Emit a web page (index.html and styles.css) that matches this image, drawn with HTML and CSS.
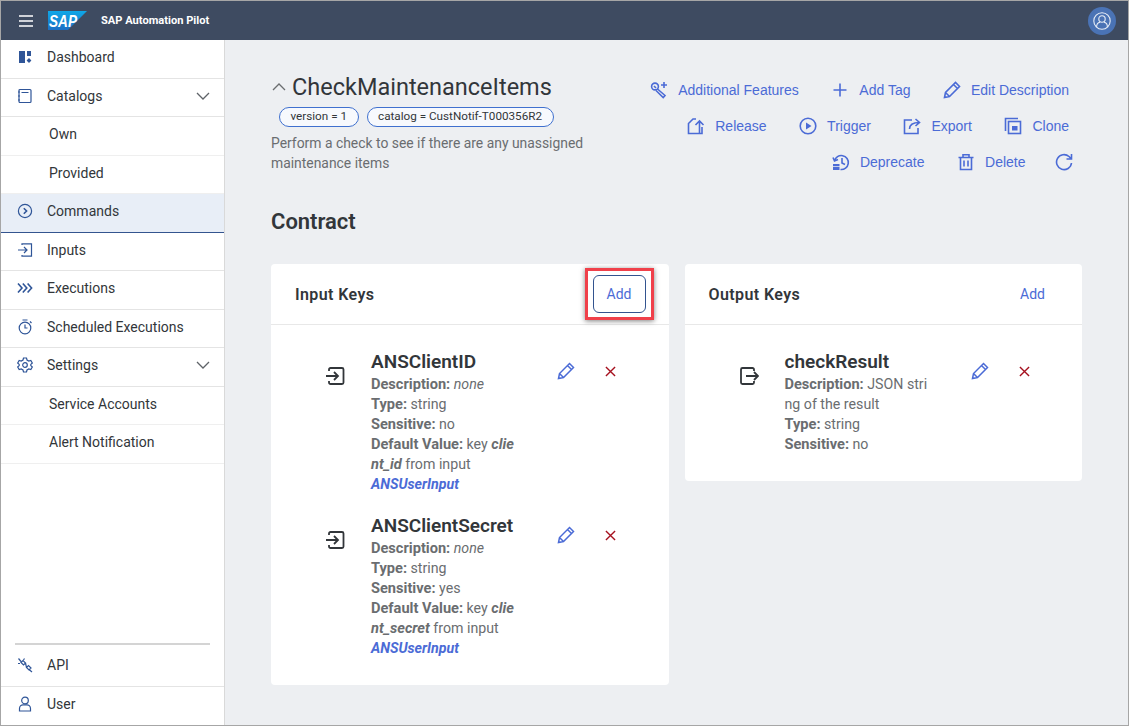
FILE: index.html
```html
<!doctype html>
<html lang="en">
<head>
	<meta charset="utf-8">
	<title>SAP Automation Pilot</title>
	<link rel="stylesheet" href="styles.css">
</head>
<body>
	<div class="frame">
		<div class="topbar">
			<svg class="burger" viewBox="0 0 14 12"><path d="M0 1h14M0 6h14M0 11h14"/></svg>
			<svg class="logo" viewBox="0 0 39 19">
				<defs><linearGradient id="sapblue" x1="0" y1="0" x2="0" y2="1"><stop offset="0" stop-color="#0fa8e8"/><stop offset="1" stop-color="#1c6fc4"/></linearGradient></defs>
				<path d="M0 0h39L20 19H0z" fill="url(#sapblue)"/>
				<text x="1" y="15.500" textLength="28" lengthAdjust="spacingAndGlyphs" class="logo-text">SAP</text>
			</svg>
			<div class="product">SAP Automation Pilot</div>
			<div class="avatar">
				<svg viewBox="0 0 18 18"><circle cx="9" cy="9" r="8.200"/><circle cx="9" cy="7" r="3.200"/><path d="M3.600 15c0-3 2-4.600 3.400-4.800M14.400 15c0-3-2-4.600-3.400-4.800"/></svg>
			</div>
		</div>
		<div class="main">
			<div class="sidebar">
				<div class="nav">
					<div class="nav-item">
						<svg class="nav-icon" viewBox="0 0 16 16"><path class="solid" d="M2 2h6v12H2zM10 2h4v5h-4z"/><path class="solid" d="M12 9l2.400 2.400L12 14l-2.400-2.600z"/></svg>
						Dashboard
					</div>
					<div class="nav-item">
						<svg class="nav-icon" viewBox="0 0 16 16"><rect x="2" y="1.500" width="12" height="13" rx="1"/><path d="M4.500 4.500h7M1 4h2M1 8h2M1 12h2"/></svg>
						Catalogs
						<svg class="caret" viewBox="0 0 14 8"><path d="M1 1l6 6 6-6"/></svg>
					</div>
					<div class="nav-item sub">Own</div>
					<div class="nav-item sub">Provided</div>
					<div class="nav-item active">
						<svg class="nav-icon" viewBox="0 0 16 16"><circle cx="8" cy="8" r="6.600"/><path class="thick" d="M6.800 5.200L9.600 8l-2.800 2.800"/></svg>
						Commands
					</div>
					<div class="nav-item">
						<svg class="nav-icon" viewBox="0 0 16 16"><path d="M5 3V1.800h9.500v12.400H5V13M1 8h8.500M7 5l3 3-3 3"/></svg>
						Inputs
					</div>
					<div class="nav-item">
						<svg class="nav-icon" viewBox="0 0 16 16"><path class="thick" d="M1 3.500L5 8l-4 4.500M5.800 3.500L9.800 8l-4 4.500M10.600 3.500L14.600 8l-4 4.500"/></svg>
						Executions
					</div>
					<div class="nav-item">
						<svg class="nav-icon" viewBox="0 0 16 16"><circle cx="8" cy="9" r="5.800"/><path d="M8 5.500V9h2.500M5.500 1h5M13 2.500l1.500 1.500"/></svg>
						Scheduled Executions
					</div>
					<div class="nav-item">
						<svg class="nav-icon" viewBox="0 0 16 16"><path d="M6.500 1h3l.5 2 1.800 1 2-.6 1.500 2.600-1.500 1.400v1.200l1.500 1.400-1.500 2.600-2-.6-1.800 1-.5 2h-3l-.5-2-1.800-1-2 .6L.7 10l1.500-1.400V7.400L.7 6l1.500-2.600 2 .6L6 3z"/><circle cx="8" cy="8" r="2.300"/></svg>
						Settings
						<svg class="caret" viewBox="0 0 14 8"><path d="M1 1l6 6 6-6"/></svg>
					</div>
					<div class="nav-item sub">Service Accounts</div>
					<div class="nav-item sub">Alert Notification</div>
				</div>
				<div class="nav-bottom">
					<div class="nav-item">
						<svg class="nav-icon" viewBox="0 0 16 16"><path d="M4 5.500L6 3.500l2.500 2.500-2 2zM9.500 10.500l2-2 2.500 2.500-2 2zM1.500 1.500L4 4.500M12 12.500L15 15M8.500 6l1 4.500M1 6.500h2M7.500 1.500L6.500 3"/></svg>
						API
					</div>
					<div class="nav-item">
						<svg class="nav-icon" viewBox="0 0 16 16"><circle cx="8" cy="4.500" r="3.300"/><path d="M2.500 15v-2.500C2.500 10 4.500 8.800 6 8.800h4c1.500 0 3.500 1.200 3.500 3.700V15z"/></svg>
						User
					</div>
				</div>
			</div>
			<div class="content">
				<div class="head">
					<div class="head-left">
						<div class="title-row">
							<svg class="title-caret" viewBox="0 0 14 8"><path d="M1 7l6-6 6 6"/></svg>
							<h1>CheckMaintenanceItems</h1>
						</div>
						<div class="chips">
							<span class="chip">version = 1</span>
							<span class="chip">catalog = CustNotif-T000356R2</span>
						</div>
						<p class="desc">Perform a check to see if there are any unassigned maintenance items</p>
					</div>
					<div class="actions">
						<div class="action-row">
							<a class="action">
								<svg viewBox="0 0 18 18"><circle cx="5" cy="5.500" r="3.400"/><path d="M7.500 8l7.500 6.500-1.800 2-7.200-7M4 5l2 2M14 1v6M11 4h6"/></svg>
								Additional Features
							</a>
							<a class="action">
								<svg viewBox="0 0 18 18"><path d="M9 2.500v13M2.500 9h13"/></svg>
								Add Tag
							</a>
							<a class="action">
								<svg viewBox="0 0 18 18"><path d="M1.500 16.500l1-5L12.500 1.500l4 4-10 10zM2.500 11.500l4 4M10.500 3.500l4 4"/></svg>
								Edit Description
							</a>
						</div>
						<div class="action-row">
							<a class="action">
								<svg viewBox="0 0 18 18"><path d="M9 2H6L1.500 6.500V16.500H15V10M12.500 16.500V4M8.500 8l4-4 4 4"/></svg>
								Release
							</a>
							<a class="action">
								<svg viewBox="0 0 18 18"><circle cx="9" cy="9" r="7.800"/><path class="solid" d="M7 5.500L12.500 9 7 12.500z"/></svg>
								Trigger
							</a>
							<a class="action">
								<svg viewBox="0 0 18 18"><path d="M9 3H1.500v13.500H15V11M6.500 12c0-4 3-6.500 10-6.500M12.500 2L16.500 5.500 12.500 9"/></svg>
								Export
							</a>
							<a class="action">
								<svg viewBox="0 0 18 18"><path d="M1.500 14V1.500H14"/><rect x="4.500" y="4.500" width="12" height="12"/><path class="solid" d="M8 9h5.500v4.500H8z"/></svg>
								Clone
							</a>
						</div>
						<div class="action-row">
							<a class="action">
								<svg viewBox="0 0 18 18"><path d="M2.500 8a7 7 0 1 1 6 8.500M1 4.500l1.500 3.500 3.500-1.500M10 5v5l3 1.500"/><path class="solid" d="M1 11h6.500v2.200H1zM1 14h6.500v3H1z"/></svg>
								Deprecate
							</a>
							<a class="action">
								<svg viewBox="0 0 18 18"><path d="M1.500 4.500h15M6 4.500V1.800h6v2.700M3.500 4.500V16.500h11v-12M7 7.500v6M11 7.500v6"/></svg>
								Delete
							</a>
							<a class="action refresh">
								<svg viewBox="0 0 18 18"><path d="M16.500 10a7.500 7.500 0 1 1-2.500-6.500L16.500 6M16.500 1v5h-5"/></svg>
							</a>
						</div>
					</div>
				</div>
				<h2>Contract</h2>
				<div class="cards">
					<div class="card">
						<div class="card-head">
							<span class="card-title">Input Keys</span>
							<span class="highlight"><button class="add outlined">Add</button></span>
						</div>
						<div class="card-body">
							<div class="key">
								<svg class="key-icon" viewBox="0 0 20 20"><path d="M4 5V3.500A1.500 1.500 0 0 1 5.500 2H17a1.500 1.500 0 0 1 1.500 1.500v13A1.500 1.500 0 0 1 17 18H5.500A1.500 1.500 0 0 1 4 16.500V15M1 10h12M9 6l4 4-4 4"/></svg>
								<div class="key-text">
									<div class="key-name">ANSClientID</div>
									<div><b>Description:</b> <i>none</i></div>
									<div><b>Type:</b> string</div>
									<div><b>Sensitive:</b> no</div>
									<div><b>Default Value:</b> key <b><i>client_id</i></b> from input <a class="link">ANSUserInput</a></div>
								</div>
								<div class="key-actions">
									<svg class="edit" viewBox="0 0 18 18"><path d="M1.500 16.500l1-5L12.500 1.500l4 4-10 10zM2.500 11.500l4 4M10.500 3.500l4 4"/></svg>
									<svg class="remove" viewBox="0 0 12 12"><path d="M1 1l10 10M11 1L1 11"/></svg>
								</div>
							</div>
							<div class="key">
								<svg class="key-icon" viewBox="0 0 20 20"><path d="M4 5V3.500A1.500 1.500 0 0 1 5.500 2H17a1.500 1.500 0 0 1 1.500 1.500v13A1.500 1.500 0 0 1 17 18H5.500A1.500 1.500 0 0 1 4 16.500V15M1 10h12M9 6l4 4-4 4"/></svg>
								<div class="key-text">
									<div class="key-name">ANSClientSecret</div>
									<div><b>Description:</b> <i>none</i></div>
									<div><b>Type:</b> string</div>
									<div><b>Sensitive:</b> yes</div>
									<div><b>Default Value:</b> key <b><i>client_secret</i></b> from input <a class="link">ANSUserInput</a></div>
								</div>
								<div class="key-actions">
									<svg class="edit" viewBox="0 0 18 18"><path d="M1.500 16.500l1-5L12.500 1.500l4 4-10 10zM2.500 11.500l4 4M10.500 3.500l4 4"/></svg>
									<svg class="remove" viewBox="0 0 12 12"><path d="M1 1l10 10M11 1L1 11"/></svg>
								</div>
							</div>
						</div>
					</div>
					<div class="card">
						<div class="card-head">
							<span class="card-title">Output Keys</span>
							<button class="add">Add</button>
						</div>
						<div class="card-body">
							<div class="key">
								<svg class="key-icon" viewBox="0 0 20 20"><path d="M15 5V3.500A1.500 1.500 0 0 0 13.500 2H3.500A1.500 1.500 0 0 0 2 3.500v13A1.500 1.500 0 0 0 3.500 18h10a1.500 1.500 0 0 0 1.500-1.500V15M7 10h12M15 6l4 4-4 4"/></svg>
								<div class="key-text">
									<div class="key-name">checkResult</div>
									<div><b>Description:</b> JSON string of the result</div>
									<div><b>Type:</b> string</div>
									<div><b>Sensitive:</b> no</div>
								</div>
								<div class="key-actions">
									<svg class="edit" viewBox="0 0 18 18"><path d="M1.500 16.500l1-5L12.500 1.500l4 4-10 10zM2.500 11.500l4 4M10.500 3.500l4 4"/></svg>
									<svg class="remove" viewBox="0 0 12 12"><path d="M1 1l10 10M11 1L1 11"/></svg>
								</div>
							</div>
						</div>
					</div>
				</div>
			</div>
		</div>
	</div>
</body>
</html>
```
FILE: styles.css
```css
*{
	box-sizing: border-box;
}
html,body{
	margin: 0;
	height: 100%;
}
body{
	font-family: Roboto, sans-serif;
	font-size: 14px;
	color: #32363a;
	overflow: hidden;
}
svg{
	fill: none;
	stroke: currentColor;
	flex: none;
}
svg .solid{
	fill: currentColor;
	stroke: none;
}
.frame{
	height: 726px;
	border: 1px solid #a6a6a6;
	display: flex;
	flex-direction: column;
}
.topbar{
	height: 39px;
	flex: none;
	background: #3e4b61;
	display: flex;
	align-items: center;
	color: white;
	padding: 0 12px 0 18px;
}
.burger{
	width: 14px;
	height: 12px;
	stroke-width: 1.5;
}
.logo{
	width: 39px;
	height: 19px;
	margin-left: 15px;
	stroke: none;
}
.logo-text{
	font-family: 'Liberation Sans', sans-serif;
	font-size: 16.500px;
	font-weight: bold;
	font-style: italic;
	fill: white;
}
.product{
	margin-left: 14px;
	font-size: 11.100px;
	font-weight: 700;
}
.avatar{
	margin-left: auto;
	width: 28px;
	height: 28px;
	border-radius: 50%;
	background: #4a73b5;
	display: flex;
	align-items: center;
	justify-content: center;
}
.avatar svg{
	width: 18px;
	height: 18px;
	stroke: #e8eef7;
	stroke-width: 1.1;
}
.main{
	flex: 1;
	display: flex;
	min-height: 0;
}
.sidebar{
	width: 224px;
	flex: none;
	background: white;
	border-right: 1px solid #d9d9d9;
	display: flex;
	flex-direction: column;
}
.nav-bottom{
	margin-top: auto;
}
.nav-bottom::before{
	content: "";
	display: block;
	height: 2px;
	margin: 0 14px 3px;
	background: #d4d4d4;
}
.nav-item{
	height: 38.500px;
	display: flex;
	align-items: center;
	padding: 0 14px 3px 16px;
	border-bottom: 1px solid #e4e4e4;
}
.nav-bottom .nav-item:last-child{
	border-bottom: 0;
}
.nav-item.sub{
	padding-left: 48px;
	border-bottom-color: #efefef;
}
.nav-item.active{
	background: #e8eef7;
	border-bottom-color: #33548f;
}
.nav-icon{
	width: 16px;
	height: 16px;
	margin-right: 14px;
	color: #2f5598;
	stroke-width: 1.2;
}
.nav-icon .thick{
	stroke-width: 1.6;
}
.caret{
	width: 14px;
	height: 8px;
	margin-left: auto;
	color: #5f6368;
	stroke-width: 1.3;
}
.content{
	flex: 1;
	min-width: 0;
	background: #edeff2;
	padding: 33px 46px 0 46px;
}
.head{
	display: flex;
	justify-content: space-between;
}
.head-left{
	width: 330px;
}
.title-row{
	display: flex;
	align-items: center;
	height: 28px;
}
.title-caret{
	width: 14px;
	height: 8px;
	margin-left: 1px;
	margin-right: 6px;
	color: #6a6d70;
	stroke-width: 1.3;
}
h1{
	margin: 0;
	font-size: 23.500px;
	font-weight: 400;
	line-height: 28px;
}
.chips{
	display: flex;
	gap: 8px;
	margin: 6px 0 0 8px;
}
.chip{
	height: 20px;
	line-height: 17px;
	padding: 0 10.500px;
	border: 1.500px solid #3f70cf;
	border-radius: 10px;
	background: #f7f9fd;
	font-size: 11.700px;
}
.desc{
	margin: 6px 0 0;
	line-height: 20px;
	color: #6a6d70;
	font-size: 13.900px;
}
.actions{
	padding: 4px 13px 0 0;
	display: flex;
	flex-direction: column;
	gap: 10px;
}
.action-row{
	display: flex;
	justify-content: flex-end;
	gap: 32.500px;
	height: 26px;
}
.action{
	display: flex;
	align-items: center;
	gap: 10px;
	color: #4b6bd6;
	font-family: 'Liberation Sans', sans-serif;
	font-size: 14px;
}
.action svg{
	width: 18px;
	height: 18px;
	stroke-width: 1.6;
}
.action.refresh{
	margin-left: -3px;
	margin-right: -4px;
}
h2{
	margin: 33px 0 0;
	font-size: 22px;
	font-weight: 600;
	line-height: 28px;
}
.cards{
	display: flex;
	align-items: flex-start;
	gap: 16px;
	margin-top: 28px;
}
.card{
	flex: 1;
	background: white;
	border-radius: 4px;
}
.card-head{
	height: 61px;
	display: flex;
	align-items: center;
	justify-content: space-between;
	padding: 0 23px 0 24px;
	border-bottom: 1px solid #e8e8e8;
}
.card-title{
	font-weight: 600;
	font-size: 16px;
	letter-spacing: 0.400px;
}
.add{
	width: 53px;
	height: 38px;
	padding: 0;
	background: white;
	border: 0;
	border-radius: 6px;
	font: inherit;
	color: #4b6bd6;
}
.add.outlined{
	border: 1px solid #33548f;
}
.highlight{
	position: relative;
	display: flex;
}
.highlight::after{
	content: "";
	position: absolute;
	inset: -7px -8px;
	border: 3px solid #f0404a;
	box-shadow: 0 1px 5px rgba(0,0,0,0.5);
}
.card-body{
	padding: 26px 0 27px 54px;
	display: flex;
	flex-direction: column;
	gap: 21px;
}
.key{
	display: flex;
	align-items: flex-start;
}
.key-icon{
	width: 20px;
	height: 20px;
	margin-top: 15px;
	stroke-width: 1.8;
	color: #32363a;
}
.key-text{
	width: 146px;
	margin-left: 26px;
	line-height: 20px;
	font-size: 14.200px;
	color: #6a6d70;
}
.key-text b{
	font-size: 14.600px;
}
.key-text div{
	word-break: break-all;
}
.key-text .key-name{
	font-size: 19px;
	font-weight: 600;
	line-height: 22px;
	color: #32363a;
	margin-bottom: 1px;
	word-break: normal;
	white-space: nowrap;
}
.link{
	display: block;
	color: #4b6bd6;
	font-weight: bold;
	font-style: italic;
}
.key-actions{
	margin-left: 40px;
	margin-top: 11px;
	display: flex;
	align-items: center;
	gap: 30px;
}
.edit{
	width: 18px;
	height: 18px;
	color: #4b6bd6;
	stroke-width: 1.5;
}
.remove{
	width: 11px;
	height: 11px;
	color: #a5101e;
	stroke-width: 1.5;
}
```
